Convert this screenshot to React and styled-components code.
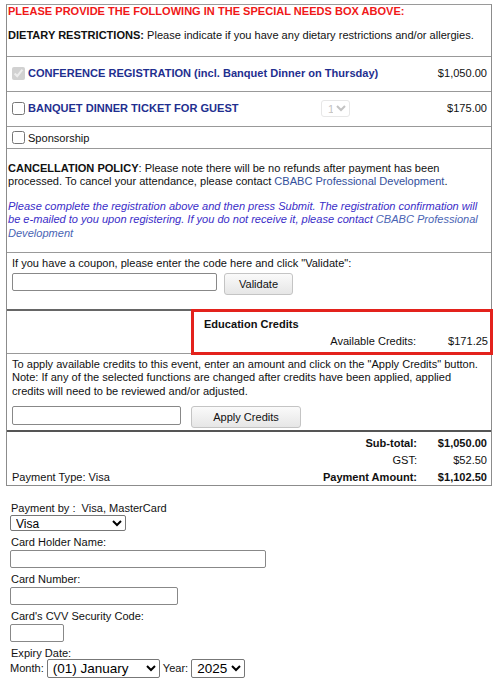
import React from "react";
import styled, { createGlobalStyle } from "styled-components";

const GlobalStyle = createGlobalStyle`
  body {
    margin: 0;
    background: #fff;
    font-family: Arial, "Liberation Sans", sans-serif;
    font-size: 11.05px;
    color: #111;
  }
`;

const Page = styled.div`
  width: 500px;
  box-sizing: border-box;
  padding: 4px 8px 0 6px;
`;

const Box = styled.div`
  border: 1px solid #8c8c8c;
  border-top-color: #9a9a9a;
`;

const Section = styled.div`
  border-top: ${(p) => (p.$none ? "none" : "1px solid #999")};
  padding: ${(p) => p.$pad || "0"};
  line-height: 13.5px;
`;

const Heading = styled.div`
  color: #f01818;
  font-weight: bold;
  line-height: 13px;
`;

const Dietary = styled.div`
  margin-top: 11px;
  white-space: nowrap;
`;

const ItemRow = styled.div`
  display: flex;
  align-items: center;
  height: ${(p) => p.$h}px;
  padding: 0 4px 0 5px;
`;

const Check = styled.input.attrs({ type: "checkbox" })`
  margin: 0 3px 0 0;
  width: 13px;
  height: 13px;
`;

const ItemName = styled.span`
  flex: 1;
  color: ${(p) => (p.$plain ? "#111" : "#1f2f8f")};
  font-weight: ${(p) => (p.$plain ? "normal" : "bold")};
  position: relative;
  top: ${(p) => (p.$plain ? "2px" : "0")};
`;

const QtySelect = styled.select`
  width: 29px;
  height: 17px;
  font-size: 11px;
  padding: 0 0 0 2px;
  margin-right: 57px;
  border: 1px solid #ddd;
  border-radius: 3px;
  background: #fff;
  color: #aaa;
`;

const Price = styled.span`
  width: 80px;
  text-align: right;
`;

const Para = styled.p`
  margin: ${(p) => p.$m || "0"};
  color: ${(p) => (p.$note ? "#3a2dc8" : "inherit")};
  font-style: ${(p) => (p.$note ? "italic" : "normal")};
  white-space: nowrap;
`;

const Link = styled.span`
  color: ${(p) => (p.$light ? "#4a64b4" : "#34509c")};
`;

const FieldRow = styled.div`
  display: flex;
  align-items: flex-start;
  gap: ${(p) => p.$gap}px;
  margin-top: ${(p) => p.$mt || 0}px;
`;

const TextBox = styled.input.attrs({ type: "text" })`
  display: block;
  box-sizing: border-box;
  width: ${(p) => p.$w}px;
  height: ${(p) => p.$h || 18}px;
  margin: ${(p) => p.$mt || 0}px 0 0;
  border: 1px solid #888;
  border-radius: 2px;
  padding: 0 3px;
  font-family: inherit;
  font-size: 12px;
`;

const Button = styled.button`
  box-sizing: border-box;
  width: ${(p) => p.$w}px;
  height: 22px;
  margin: 0;
  border: 1px solid #c4c4c4;
  border-radius: 3px;
  background: linear-gradient(#fafafa, #e6e6e6);
  font-family: inherit;
  font-size: 11.05px;
  color: #111;
  padding: 0;
`;

const CreditsHead = styled.div`
  display: flex;
  border-top: 2px solid #666;
  height: 43px;
`;

const CreditsBlank = styled.div`
  width: 184px;
  border-bottom: 1px solid #999;
`;

const RedBox = styled.div`
  flex: 1;
  box-sizing: border-box;
  margin: -2px -2px 0 0;
  height: 46px;
  border: 3px solid #e3221c;
  padding: 4px 2px 0 10px;
  line-height: 17px;
`;

const CreditsTitle = styled.div`
  font-weight: bold;
`;

const CreditsLine = styled.div`
  display: flex;
  justify-content: flex-end;
`;

const CreditsValue = styled.span`
  width: 72px;
  text-align: right;
`;

const Totals = styled.div`
  display: grid;
  grid-template-columns: 1fr auto 70px;
  grid-auto-rows: 17px;
  align-items: center;
  padding: 2px 4px 0 5px;
  border-top: 2px solid #555;
`;

const Cell = styled.span`
  text-align: ${(p) => (p.$right ? "right" : "left")};
  font-weight: ${(p) => (p.$bold ? "bold" : "normal")};
`;

const Form = styled.div`
  padding: 16px 0 0 4px;
  line-height: 13px;
`;

const Label = styled.div`
  margin-top: ${(p) => p.$mt || 0}px;
  padding-left: 1px;
`;

const Select = styled.select`
  display: block;
  box-sizing: border-box;
  width: ${(p) => p.$w}px;
  height: ${(p) => p.$h}px;
  font-family: Arial, "Liberation Sans", sans-serif;
  font-size: ${(p) => p.$fs}px;
  border: 1px solid #777;
  border-radius: 2px;
  background: #fff;
  color: #000;
  padding: 0 0 0 1px;
  margin: 0;
`;

const InlineRow = styled.div`
  display: flex;
  align-items: center;
  gap: 3px;
  margin-top: -1px;
`;

export default function App() {
  return (
    <Page>
      <GlobalStyle />
      <Box>
        <Section $none $pad="0 4px 13px 1px">
          <Heading>PLEASE PROVIDE THE FOLLOWING IN THE SPECIAL NEEDS BOX ABOVE:</Heading>
          <Dietary>
            <b>DIETARY RESTRICTIONS:</b> Please indicate if you have any dietary restrictions and/or allergies.
          </Dietary>
        </Section>

        <Section>
          <ItemRow $h={34}>
            <Check checked disabled readOnly />
            <ItemName>CONFERENCE REGISTRATION (incl. Banquet Dinner on Thursday)</ItemName>
            <Price>$1,050.00</Price>
          </ItemRow>
        </Section>

        <Section>
          <ItemRow $h={34}>
            <Check />
            <ItemName>BANQUET DINNER TICKET FOR GUEST</ItemName>
            <QtySelect disabled defaultValue="1">
              <option value="1">1</option>
            </QtySelect>
            <Price>$175.00</Price>
          </ItemRow>
        </Section>

        <Section>
          <ItemRow $h={21}>
            <Check />
            <ItemName $plain>Sponsorship</ItemName>
          </ItemRow>
        </Section>

        <Section $pad="13px 4px 12px 1px">
          <Para>
            <b>CANCELLATION POLICY</b>: Please note there will be no refunds after payment has been
            <br />
            processed. To cancel your attendance, please contact{" "}
            <Link>CBABC Professional Development</Link>.
          </Para>
          <Para $note $m="11px 0 0">
            Please complete the registration above and then press Submit. The registration confirmation will
            <br />
            be e-mailed to you upon registering. If you do not receive it, please contact{" "}
            <Link $light>CBABC Professional</Link>
            <br />
            <Link $light>Development</Link>
          </Para>
        </Section>

        <Section $pad="4px 4px 14px 5px">
          <Para>If you have a coupon, please enter the code here and click "Validate":</Para>
          <FieldRow $gap={7} $mt={2}>
            <TextBox $w={205} $h={18} />
            <Button $w={69}>Validate</Button>
          </FieldRow>
        </Section>

        <CreditsHead>
          <CreditsBlank />
          <RedBox>
            <CreditsTitle>Education Credits</CreditsTitle>
            <CreditsLine>
              <span>Available Credits:</span>
              <CreditsValue>$171.25</CreditsValue>
            </CreditsLine>
          </RedBox>
        </CreditsHead>

        <Section $none $pad="4px 4px 2px 5px">
          <Para>
            To apply available credits to this event, enter an amount and click on the "Apply Credits" button.
            <br />
            Note: If any of the selected functions are changed after credits have been applied, applied
            <br />
            credits will need to be reviewed and/or adjusted.
          </Para>
          <FieldRow $gap={10} $mt={8}>
            <TextBox $w={169} $h={19} />
            <Button $w={110}>Apply Credits</Button>
          </FieldRow>
        </Section>

        <Totals>
          <Cell />
          <Cell $right $bold>Sub-total:</Cell>
          <Cell $right $bold>$1,050.00</Cell>
          <Cell />
          <Cell $right>GST:</Cell>
          <Cell $right>$52.50</Cell>
          <Cell>Payment Type: Visa</Cell>
          <Cell $right $bold>Payment Amount:</Cell>
          <Cell $right $bold>$1,102.50</Cell>
        </Totals>
      </Box>

      <Form>
        <Label>Payment by :&nbsp; Visa, MasterCard</Label>
        <Select $w={116} $h={16} $fs={12} defaultValue="Visa">
          <option>Visa</option>
          <option>MasterCard</option>
        </Select>
        <Label $mt={5}>Card Holder Name:</Label>
        <TextBox $w={256} $h={18} $mt={1} />
        <Label $mt={5}>Card Number:</Label>
        <TextBox $w={168} $h={18} $mt={1} />
        <Label $mt={5}>Card's CVV Security Code:</Label>
        <TextBox $w={54} $h={18} $mt={1} />
        <Label $mt={5}>Expiry Date:</Label>
        <InlineRow>
          <span>Month:</span>
          <Select $w={113} $h={19} $fs={13.5} defaultValue="01">
            <option value="01">(01) January</option>
          </Select>
          <span>Year:</span>
          <Select $w={54} $h={19} $fs={13.5} defaultValue="2025">
            <option>2025</option>
          </Select>
        </InlineRow>
      </Form>
    </Page>
  );
}
